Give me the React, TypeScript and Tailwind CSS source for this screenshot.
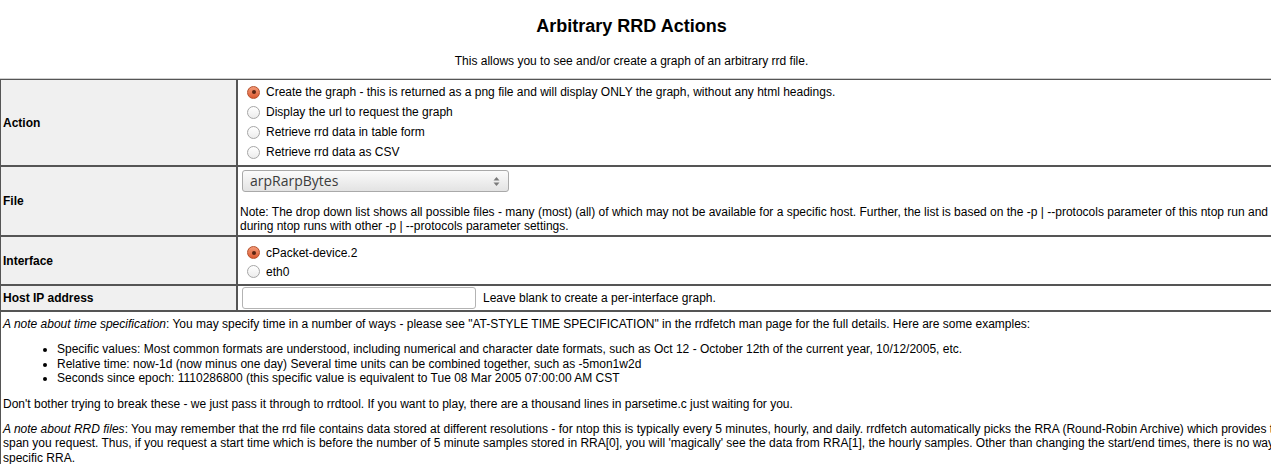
import React from 'react';

const Radio: React.FC<{ checked?: boolean }> = ({ checked }) =>
  checked ? (
    <span className="relative inline-block w-[13px] h-[13px] rounded-full border border-[#b4502c] bg-gradient-to-b from-[#f39a78] to-[#dc5a30] shrink-0">
      <span className="absolute left-[3.5px] top-[3.5px] w-[4px] h-[4px] rounded-full bg-[#5a2412]" />
    </span>
  ) : (
    <span className="inline-block w-[13px] h-[13px] rounded-full border border-[#a6a6a6] bg-gradient-to-b from-white to-[#ececec] shrink-0" />
  );

const RadioLine: React.FC<{ checked?: boolean; label: string; h: string }> = ({ checked, label, h }) => (
  <div className={`flex items-center ${h}`}>
    <span className="ml-[7px] mr-[6px] flex">
      <Radio checked={checked} />
    </span>
    <span>{label}</span>
  </div>
);

const labelCell = 'w-[237px] bg-[#f0f0f0] border border-[#555] px-[2px] font-bold align-middle text-left';
const valueCell = 'border border-[#555] px-[2px] align-top text-left';

export default function App() {
  return (
    <div className="w-full overflow-hidden bg-white text-black text-[12px] leading-[14px] font-['Liberation_Sans',Arial,sans-serif]">
      <div className="pr-[8px] text-center">
        <h1 className="font-bold text-[18px] leading-[22px] pt-[15px]">Arbitrary RRD Actions</h1>
        <p className="mt-[17px]">This allows you to see and/or create a graph of an arbitrary rrd file.</p>
      </div>

      <table className="mt-[10px] w-[1448px] border-separate border-spacing-0 border-t border-[#cfcfcf]">
        <tbody>
          <tr>
            <td className={labelCell}>Action</td>
            <td className={`${valueCell} pt-[2px] pb-[3px]`}>
              <RadioLine checked h="h-[20px]" label="Create the graph - this is returned as a png file and will display ONLY the graph, without any html headings." />
              <RadioLine h="h-[20px]" label="Display the url to request the graph" />
              <RadioLine h="h-[20px]" label="Retrieve rrd data in table form" />
              <RadioLine h="h-[20px]" label="Retrieve rrd data as CSV" />
            </td>
          </tr>
          <tr>
            <td className={labelCell}>File</td>
            <td className={`${valueCell} pt-[3px] pb-[2px]`}>
              <div className="relative w-[267px] h-[22px] ml-[2px] rounded-[3px] border border-[#a9a9a9] bg-gradient-to-b from-[#fbfbfb] to-[#e3e3e3] flex items-center px-[7px] text-[14px] text-[#3c3c3c] font-['Open_Sans','Noto_Sans',sans-serif]">
                arpRarpBytes
                <svg className="absolute right-[8px] top-[5px]" width="7" height="11" viewBox="0 0 7 11">
                  <path d="M3.5 1 L6.5 4.5 L0.5 4.5 Z" fill="#7a7a7a" />
                  <path d="M3.5 10 L6.5 6.5 L0.5 6.5 Z" fill="#7a7a7a" />
                </svg>
              </div>
              <p className="mt-[13px]">
                Note: The drop down list shows all possible files - many (most) (all) of which may not be available for a specific host. Further, the list is based on the -p | --protocols parameter of this ntop run and may not include files created during ntop runs with other -p | --protocols parameter settings.
              </p>
            </td>
          </tr>
          <tr>
            <td className={labelCell}>Interface</td>
            <td className={`${valueCell} pt-[6px] pb-[3px]`}>
              <RadioLine checked h="h-[19px]" label="cPacket-device.2" />
              <RadioLine h="h-[19px]" label="eth0" />
            </td>
          </tr>
          <tr>
            <td className={labelCell}>Host IP address</td>
            <td className={`${valueCell} py-[1px]`}>
              <div className="flex items-center">
                <div className="w-[234px] h-[22px] ml-[2px] rounded-[3px] border border-[#b3b3b3] bg-white" />
                <span className="ml-[7px]">Leave blank to create a per-interface graph.</span>
              </div>
            </td>
          </tr>
          <tr>
            <td colSpan={2} className={`${valueCell} pt-[5px] pb-[4px] leading-[14.5px]`}>
              <p>
                <i>A note about time specification</i>: You may specify time in a number of ways - please see "AT-STYLE TIME SPECIFICATION" in the rrdfetch man page for the full details. Here are some examples:
              </p>
              <ul className="list-disc pl-[54px] my-[10.75px]">
                <li>Specific values: Most common formats are understood, including numerical and character date formats, such as Oct 12 - October 12th of the current year, 10/12/2005, etc.</li>
                <li>Relative time: now-1d (now minus one day) Several time units can be combined together, such as -5mon1w2d</li>
                <li>Seconds since epoch: 1110286800 (this specific value is equivalent to Tue 08 Mar 2005 07:00:00 AM CST</li>
              </ul>
              <p>
                Don't bother trying to break these - we just pass it through to rrdtool. If you want to play, there are a thousand lines in parsetime.c just waiting for you.
              </p>
              <p className="mt-[10.75px]">
                <i>A note about RRD files</i>: You may remember that the rrd file contains data stored at different resolutions - for ntop this is typically every 5 minutes, hourly, and daily. rrdfetch automatically picks the RRA (Round-Robin Archive) which provides the best resolution for the time span you request. Thus, if you request a start time which is before the number of 5 minute samples stored in RRA[0], you will 'magically' see the data from RRA[1], the hourly samples. Other than changing the start/end times, there is no way to force rrdfetch to use a specific RRA.
              </p>
            </td>
          </tr>
        </tbody>
      </table>
    </div>
  );
}
